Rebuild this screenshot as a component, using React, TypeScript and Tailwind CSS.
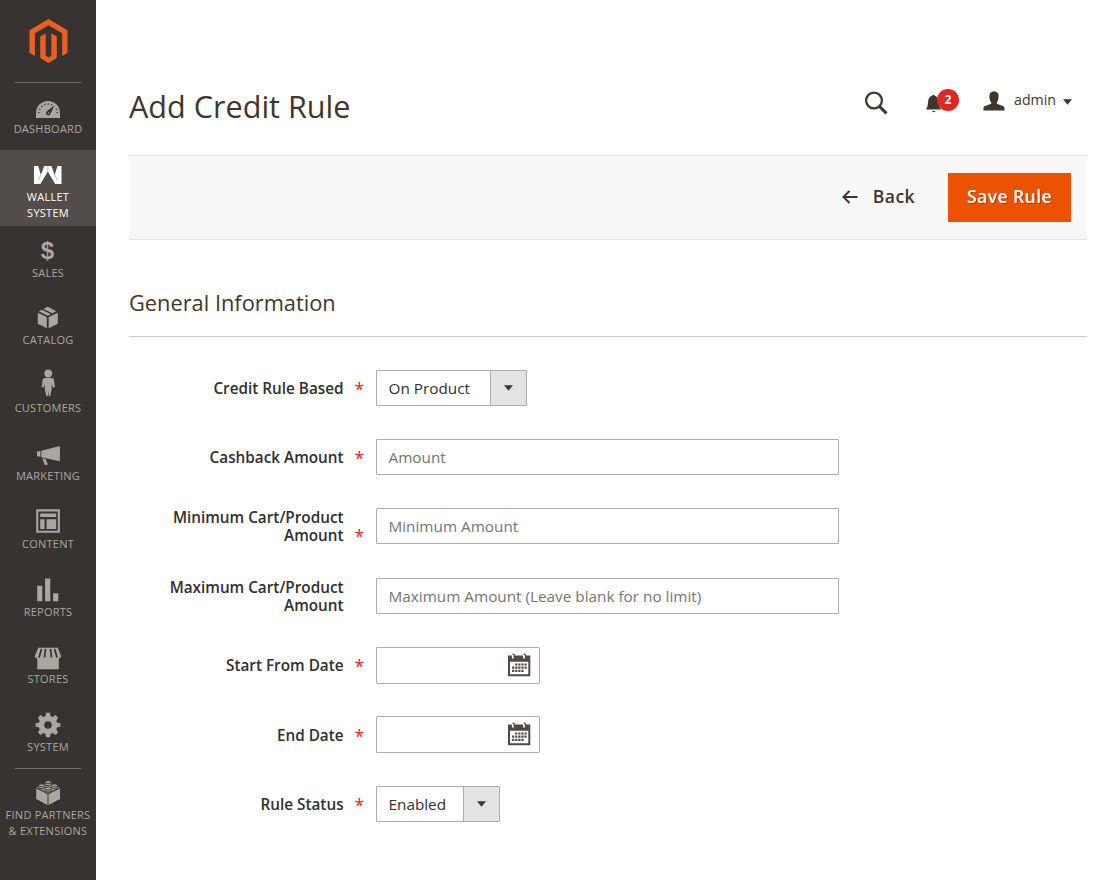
import React from 'react';

type IconProps = { children: React.ReactNode };

const MenuIcon: React.FC<IconProps> = ({ children }) => (
  <svg viewBox="0 0 32 28" className="block w-8 h-7 shrink-0" fill="currentColor">
    {children}
  </svg>
);

const DashboardIcon = () => (
  <MenuIcon>
    <path d="M4 25V20a12 12 0 0 1 24 0v5z" />
    <g fill="#373330" transform="translate(0 .6)">
      <circle cx="6.800" cy="19" r=".8" />
      <circle cx="7.800" cy="15.600" r=".8" />
      <circle cx="10" cy="12.800" r=".8" />
      <circle cx="13" cy="10.900" r=".8" />
      <circle cx="16.300" cy="10.400" r=".8" />
      <circle cx="19.600" cy="11.200" r=".8" />
      <circle cx="24.300" cy="15.600" r=".8" />
      <circle cx="25.200" cy="19" r=".8" />
      <path d="M22.300 11.800l-3.800 8.400a2.300 2.300 0 1 1-3.600-2.500z" />
    </g>
    <circle cx="16.600" cy="20" r=".7" />
  </MenuIcon>
);

const WalletIcon = () => (
  <MenuIcon>
    <path d="M2 5h4.200l2.700 9L12.200 5h7.200l3.300 9 2.700-9h4.100v18h-6.300l-7.400-12.500L8.400 23H2z" />
    <path fill="none" stroke="#8d8986" strokeWidth=".6" d="M15.800 5.200v5.300M8.900 14l-2.600 5M22.700 14l2.600 5" />
  </MenuIcon>
);

const SalesIcon = () => (
  <MenuIcon>
    <text x="15.600" y="22.300" textAnchor="middle" className="font-['Liberation_Sans',sans-serif] text-[24px] font-bold">$</text>
  </MenuIcon>
);

const CatalogIcon = () => (
  <MenuIcon>
    <path d="M5.800 8.700l9 4.300v11.200l-9-4.500zM25.800 8.700l-9.100 4.300v11.200l9.100-4.500z" />
    <path d="M6.800 7.300l3.100-1.500 9 4.400-3.100 1.500zM11.500 5l3.900-2.200 3 1.300 5.900 3.200-3.900 2z" />
  </MenuIcon>
);

const CustomersIcon = () => (
  <svg viewBox="0 -3 32 31" className="block w-8 h-[31px] -mt-[3px] shrink-0" fill="currentColor">
    <circle cx="16.300" cy="1.500" r="3.900" />
    <path d="M13 6h6.600a2.500 2.500 0 0 1 2.500 2.200l.8 7.100-1.900.3-1.200-3.600-.2 6-1.500 6.300h-1.300l-.5-5.400-.6 5.400h-1.300l-1.500-6.300-.2-6-1.200 3.600-1.800-.3.800-7.100A2.500 2.500 0 0 1 13 6z" />
  </svg>
);

const MarketingIcon = () => (
  <MenuIcon>
    <path d="M5 11.600l3.400-.6v5.800L5 16.200zM9.300 10.800L27.900 6v15.200L9.300 17.300zM10.200 18.200l3.500.8 2.100 5.600-2.800.6z" />
  </MenuIcon>
);

const ContentIcon = () => (
  <MenuIcon>
    <path fillRule="evenodd" d="M4.200 1.300h23.700v23.500H4.200zM6.300 3.400v19.300h19.500V3.400z" />
    <path d="M8.200 5.400h16v3.700h-16zM8.200 11.200h4.300v9.700H8.200zM14.600 11.200h9.600v9.700h-9.600z" />
  </MenuIcon>
);

const ReportsIcon = () => (
  <MenuIcon>
    <path d="M5.200 9.700h5.100v15.500H5.200zM13.100 2.500h5.200v22.700h-5.200zM21.100 17.300h5.200v7.900h-5.200z" />
  </MenuIcon>
);

const StoresIcon = () => (
  <MenuIcon>
    <path d="M5.300 14.300h21.500v12H5.300z" />
    <path d="M6.300 4.700h19.500l3.100 7.700a2.700 2.700 0 0 1-2.700 3H5.700a2.700 2.700 0 0 1-2.700-3z" />
    <path fill="none" stroke="#373330" strokeWidth="1.700" d="M9.500 6L7 14.500M13.500 6l-1 8.500M18.500 6l1 8.500M22.600 6l2.400 8.500" />
  </MenuIcon>
);

const SystemIcon = () => (
  <MenuIcon>
    <path
      fillRule="evenodd"
      d="M14.100 1.800h3.800l.6 3.200 2.200.9 2.700-1.800 2.700 2.700-1.800 2.700.9 2.200 3.200.6v3.400l-3.200.6-.9 2.200 1.800 2.700-2.700 2.700-2.700-1.800-2.200.9-.6 3.200h-3.800l-.6-3.200-2.200-.9-2.700 1.800-2.700-2.700 1.800-2.700-.9-2.200-3.200-.6v-3.400l3.200-.6.9-2.200-1.800-2.700 2.700-2.700 2.700 1.800 2.200-.9zM16 10.200a3.800 3.800 0 1 0 0 7.600 3.800 3.800 0 0 0 0-7.600z"
    />
  </MenuIcon>
);

const PartnersIcon = () => (
  <MenuIcon>
    <path d="M4.200 9.500l11.300 5.500v11L4.200 20.100zM28 9.500l-11.500 5.500v11L28 20.100z" />
    <path d="M4.600 8.300L16 3.300l11.500 5L16 14z" />
    <g stroke="#373330" strokeWidth=".9">
      <path d="M13 3.200v1.700c0 2.300 6.200 2.300 6.200 0V3.200z" />
      <ellipse cx="16.100" cy="3.200" rx="3.200" ry="1.500" />
      <path d="M6.800 6.500v1.500c0 2.200 6 2.200 6 0V6.500z" />
      <ellipse cx="9.800" cy="6.400" rx="3.100" ry="1.500" />
      <path d="M19.500 6.500v1.500c0 2.200 6 2.200 6 0V6.500z" />
      <ellipse cx="22.500" cy="6.400" rx="3.100" ry="1.500" />
      <path d="M13 9.700v1.500c0 2.300 6.200 2.300 6.200 0V9.700z" />
      <ellipse cx="16.100" cy="9.600" rx="3.200" ry="1.500" />
    </g>
  </MenuIcon>
);

const CalendarIcon = () => (
  <svg viewBox="0 0 24 24" className="block w-6 h-6">
    <path fill="#514943" fillRule="evenodd" d="M1 2.500h22.300v20.800H1zM3 8.800v12.400h18.300V8.800z" />
    <g fill="none" stroke="#fff" strokeWidth="2.200">
      <path d="M6 1.500v4M17.100 1.500v4" />
    </g>
    <g fill="none" stroke="#514943" strokeWidth="1.300">
      <path d="M5.500 1.300c1.700-.6 2 .5 1.700 3.900M16.700 1.300c1.700-.6 2 .5 1.700 3.900" />
    </g>
    <g stroke="#514943" strokeWidth="2.200" strokeDasharray="2.200 .9">
      <path d="M8.200 11.500h11.500M5.100 14.700h14.600M5.100 17.900h11.500" />
    </g>
  </svg>
);

const menu = [
  { label: 'DASHBOARD', icon: <DashboardIcon /> },
  { label: 'WALLET\nSYSTEM', icon: <WalletIcon />, active: true },
  { label: 'SALES', icon: <SalesIcon /> },
  { label: 'CATALOG', icon: <CatalogIcon /> },
  { label: 'CUSTOMERS', icon: <CustomersIcon /> },
  { label: 'MARKETING', icon: <MarketingIcon /> },
  { label: 'CONTENT', icon: <ContentIcon /> },
  { label: 'REPORTS', icon: <ReportsIcon /> },
  { label: 'STORES', icon: <StoresIcon /> },
  { label: 'SYSTEM', icon: <SystemIcon /> },
];

const Sidebar: React.FC = () => (
  <nav className="w-24 shrink-0 bg-[#373330] text-[#aaa6a0] flex flex-col items-center text-[11px] leading-4 tracking-[0.25px]">
    <div className="h-[82px] pt-[19px] pl-px">
      <svg viewBox="0 0 40 44" preserveAspectRatio="none" className="block w-[39px] h-11" fill="#eb5f24">
        <path d="M20 0l19.500 11.200v22.600L34 37V14.300L20 6.300 6 14.300V37L.5 33.800V11.200z" />
        <path d="M11.500 17.500l5.600-3.200v22.500l2.900 1.700 2.900-1.700V14.300l5.600 3.200v21.600L20 44l-8.500-4.900z" />
      </svg>
    </div>
    <div className="w-[66px] h-px bg-[#736e69]" />
    {menu.map((item) => (
      <a
        key={item.label}
        href="#"
        className={
          item.active
            ? 'w-full h-[75.700px] pt-[11px] flex flex-col items-center text-center whitespace-pre-line bg-[#524d49] text-white'
            : 'w-full h-[67.800px] pt-[11px] first-of-type:h-[67px] first-of-type:pt-[10px] flex flex-col items-center text-center'
        }
      >
        {item.icon}
        {item.label}
      </a>
    ))}
    <div className="w-[66px] h-px bg-[#736e69]" />
    <a href="#" className="w-full pt-[10px] flex flex-col items-center text-center">
      <PartnersIcon />
      <span>FIND PARTNERS<br />&amp; EXTENSIONS</span>
    </a>
  </nav>
);

const Header: React.FC = () => (
  <header className="h-[155px] pt-[85px] flex items-start justify-between">
    <h1 className="text-[30.600px] leading-[42px] text-[#41362f]">Add Credit Rule</h1>
    <div className="flex items-center h-[30px] mt-px mr-[15px] text-[#41362f]">
      <svg viewBox="0 0 24 24" className="w-6 h-6 mt-1" fill="none" stroke="currentColor">
        <circle cx="10" cy="9.500" r="7.900" strokeWidth="2.300" />
        <path d="M15.500 15.500l7 6.800" strokeWidth="3" />
      </svg>
      <div className="relative ml-[36px] w-[34px] h-[30px]">
        <svg viewBox="0 0 18 20" className="absolute left-px top-[7px] w-[18px] h-5" fill="currentColor">
          <path d="M.8 16.400c2.100-2.200 1.900-4.400 2.200-7.400C3.300 5.200 4.800 3.300 7 2.700a1.600 1.600 0 0 1 2.800 0c2.300.6 3.800 2.500 4.100 6.300.3 3 .1 5.200 2.200 7.400zM6.600 18h3.800c-.3 1.600-3.500 1.600-3.800 0z" />
        </svg>
        <span className="absolute left-[13px] top-[3px] size-[22px] rounded-full bg-[#e22626] text-white text-[12px] font-bold leading-[22px] text-center">2</span>
      </div>
      <svg viewBox="0 0 22 20" className="ml-[25px] w-[22px] h-5" fill="currentColor">
        <path d="M.5 19.500v-2.700c.3-1.300 1.400-1.800 3-2.300l4.200-1.400c.7-.3.800-1.500.2-2.200C6.800 9.600 6.500 8 6.400 5.800 6.300 2 8 .5 11 .5s4.800 1.500 4.600 5.300c-.1 2.200-.4 3.800-1.500 5.100-.6.700-.5 1.900.2 2.200l4.200 1.400c1.600.5 2.700 1 3 2.300v2.700z" />
      </svg>
      <span className="ml-[9px] pb-[2px] text-[14.200px]">admin</span>
      <svg viewBox="0 0 10 6" className="ml-[7px] mt-[2px] w-[9px] h-[6px]" fill="currentColor">
        <path d="M0 0h10L5 6z" />
      </svg>
    </div>
  </header>
);

const Label: React.FC<{ text: string; required?: boolean }> = ({ text, required }) => (
  <div className="w-[247px] shrink-0 flex">
    <label className="w-[214.600px] pl-6 text-right text-[15.300px] leading-[18px] font-semibold text-[#303030]">{text}</label>
    {required && <span className="self-end ml-[11px] h-[18px] text-[17.600px] leading-5 text-[#e22626]">*</span>}
  </div>
);

const Field: React.FC<{ label: string; required?: boolean; children: React.ReactNode }> = ({ label, required, children }) => (
  <div className="flex items-center h-[36px] text-[15.300px] text-[#303030]">
    <Label text={label} required={required} />
    {children}
  </div>
);

const Select: React.FC<{ value: string; className: string }> = ({ value, className }) => (
  <button type="button" className={`${className} h-[36px] flex border border-[#adadad] rounded-[1px] bg-white text-left`}>
    <span className="flex-1 pl-[11.500px] leading-[35px]">{value}</span>
    <span className="w-9 h-full flex items-center justify-center bg-[#e3e3e3] border-l border-[#adadad]">
      <svg viewBox="0 0 10 6" className="w-[9px] h-[6px]" fill="#41362f">
        <path d="M0 0h10L5 6z" />
      </svg>
    </span>
  </button>
);

const TextInput: React.FC<{ placeholder: string }> = ({ placeholder }) => (
  <input
    type="text"
    placeholder={placeholder}
    className="w-[463px] h-[36px] px-[11.500px] border border-[#adadad] rounded-[1px] bg-white placeholder:text-[#757575]"
  />
);

const DateInput: React.FC = () => (
  <div className="w-[164px] h-[37px] pr-[8px] pb-px flex items-center border border-[#adadad] rounded-[1px]">
    <input type="text" className="flex-1 min-w-0 px-3 bg-transparent" />
    <CalendarIcon />
  </div>
);

const App: React.FC = () => {
  return (
    <div className="flex h-[880px] bg-white font-['Open_Sans',sans-serif] overflow-hidden">
      <Sidebar />
      <main className="flex-1 pl-[33px] pr-[33px]">
        <Header />
        <div className="h-[85px] pr-4 flex items-center justify-end bg-[#f8f8f8] border-y border-y-[#e5e5e5] text-[17.600px] font-semibold tracking-[0.4px]">
          <button className="flex items-center text-[#41362f]">
            <svg viewBox="0 0 16 14" className="w-4 h-[14px] mr-[15px]" fill="none" stroke="currentColor" strokeWidth="2">
              <path d="M15.500 7H1.500M7.500 1L1.500 7l6 6" />
            </svg>
            <span className="pb-[2px]">Back</span>
          </button>
          <button className="ml-[33px] w-[123px] h-[49px] pb-[2px] bg-[#eb5202] text-white [text-shadow:1px_1px_0_rgba(0,0,0,0.3)]">Save Rule</button>
        </div>
        <h2 className="h-[97px] pt-[47px] text-[21.800px] leading-8 text-[#41362f] border-b border-[#cccac8]">General Information</h2>
        <form className="pt-[32.600px] flex flex-col gap-[33.400px]">
          <Field label="Credit Rule Based" required>
            <Select value="On Product" className="w-[151px]" />
          </Field>
          <Field label="Cashback Amount" required>
            <TextInput placeholder="Amount" />
          </Field>
          <Field label="Minimum Cart/Product Amount" required>
            <TextInput placeholder="Minimum Amount" />
          </Field>
          <Field label="Maximum Cart/Product Amount">
            <TextInput placeholder="Maximum Amount (Leave blank for no limit)" />
          </Field>
          <Field label="Start From Date" required>
            <DateInput />
          </Field>
          <Field label="End Date" required>
            <DateInput />
          </Field>
          <Field label="Rule Status" required>
            <Select value="Enabled" className="w-[124px]" />
          </Field>
        </form>
      </main>
    </div>
  );
};

export default App;
